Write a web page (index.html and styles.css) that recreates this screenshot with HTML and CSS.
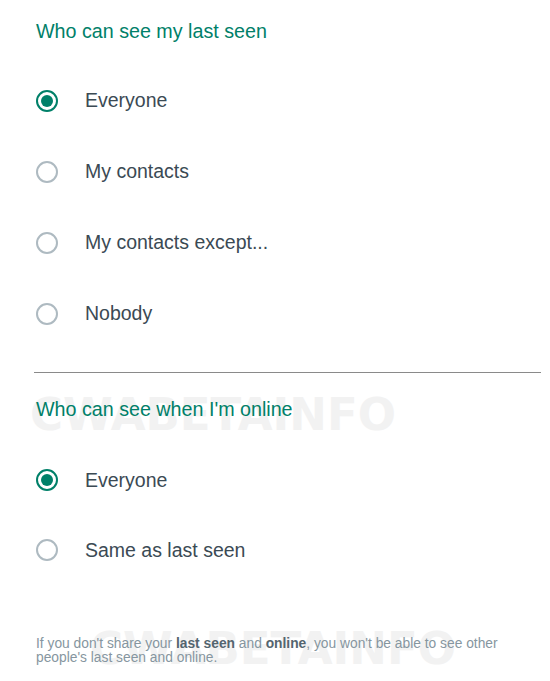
FILE: index.html
```html
<!DOCTYPE html>
<html lang="en">
<head>
  <meta charset="UTF-8" />
  <title>Last seen and online</title>
  <link rel="stylesheet" href="styles.css">
</head>
<body>
  <div class="watermark wm-top">CWABETAINFO</div>
  <div class="watermark wm-bottom">CWABETAINFO</div>

  <h3 class="section-title">Who can see my last seen</h3>
  <div class="options">
    <label class="option"><span class="radio checked"></span>Everyone</label>
    <label class="option"><span class="radio"></span>My contacts</label>
    <label class="option"><span class="radio"></span>My contacts except...</label>
    <label class="option"><span class="radio"></span>Nobody</label>
  </div>

  <hr class="divider">

  <h3 class="section-title second">Who can see when I'm online</h3>
  <div class="options">
    <label class="option"><span class="radio checked"></span>Everyone</label>
    <label class="option"><span class="radio"></span>Same as last seen</label>
  </div>

  <p class="note">If you don't share your <b>last seen</b> and <b>online</b>, you won't be able to see other people's last seen and online.</p>
</body>
</html>
```

FILE: styles.css
```css
body {
  font-family: "Liberation Sans", Arial, sans-serif;
  background: #fff;
  margin: 0;
  padding: 0 9px 0 35px;
  position: relative;
}
.section-title {
  color: #008069;
  font-size: 19.7px;
  font-weight: normal;
  line-height: 24px;
  margin: 19px 0 0 1px;
}
.section-title.second { margin-top: 24px; }
.options { display: flex; flex-direction: column; margin-top: 22px; }
.second + .options { margin-top: 24px; }
.option {
  display: flex;
  align-items: center;
  height: 71px;
  font-size: 19.5px;
  color: #3b4a54;
}
.second + .options .option { height: 70px; }
.radio {
  width: 18px;
  height: 18px;
  border: 2px solid #aebac1;
  border-radius: 50%;
  margin: 0 27px 0 1px;
  display: flex;
  align-items: center;
  justify-content: center;
}
.radio.checked { border-color: #008069; }
.radio.checked::after {
  content: "";
  width: 12px;
  height: 12px;
  border-radius: 50%;
  background: #008069;
}
.divider {
  border: none;
  border-top: 1px solid #8a8a8a;
  margin: 23px 0 0 -1px;
}
.note {
  font-size: 13.8px;
  line-height: 14px;
  color: #8696a0;
  max-width: 480px;
  margin: 52px 0 0 1px;
}
.note b { color: #54656f; }
.watermark {
  position: absolute;
  z-index: -1;
  font-family: "DejaVu Sans", sans-serif;
  font-weight: bold;
  font-size: 45px;
  color: #f2f2f2;
}
.wm-top { left: 30px; top: 388px; }
.wm-bottom { left: 90px; top: 622px; }
```
